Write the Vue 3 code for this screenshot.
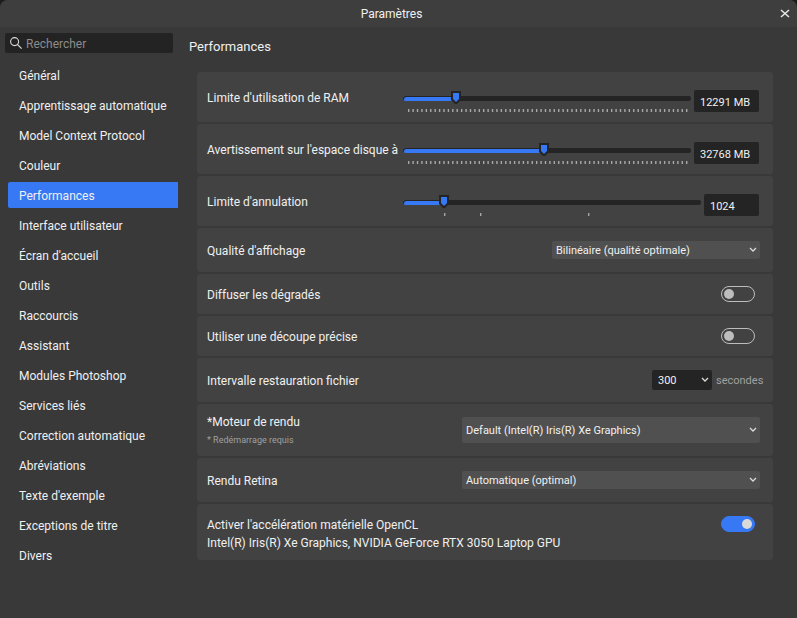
<script setup>
import { ref } from 'vue';

const search = ref('');
const current = ref('Performances');

const pages = [
  'Général',
  'Apprentissage automatique',
  'Model Context Protocol',
  'Couleur',
  'Performances',
  'Interface utilisateur',
  "Écran d'accueil",
  'Outils',
  'Raccourcis',
  'Assistant',
  'Modules Photoshop',
  'Services liés',
  'Correction automatique',
  'Abréviations',
  "Texte d'exemple",
  'Exceptions de titre',
  'Divers',
];

// 64 evenly spaced marks for the memory sliders
const evenTicks = Array.from({ length: 64 }, (_, i) => (i / 63) * 100);

// pos is the thumb position in thousandths of the slider
const sliders = ref([
  { id: 'ram', label: "Limite d'utilisation de RAM", pos: 173, value: '12291 MB', ticks: evenTicks },
  { id: 'disk', label: "Avertissement sur l'espace disque à", pos: 489, value: '32768 MB', ticks: evenTicks },
  { id: 'undo', label: "Limite d'annulation", pos: 125, value: '1024', ticks: [12.5, 25, 62.5], short: true },
]);

const dither = ref(false);
const preciseClip = ref(false);
const openCl = ref(true);
</script>

<template>
  <div class="window">
    <header class="titlebar">
      <h1>Paramètres</h1>
      <button class="close" aria-label="Fermer">
        <svg width="10" height="10" viewBox="0 0 10 10">
          <path d="M1 1L9 8M9 1L1 8" stroke="#e6e6e6" stroke-width="1.6" fill="none" />
        </svg>
      </button>
    </header>

    <div class="body">
      <aside>
        <label class="search">
          <svg width="12" height="12" viewBox="0 0 12 12">
            <circle cx="4.6" cy="4.6" r="4" stroke="#dcdcdc" stroke-width="1.1" fill="none" />
            <path d="M7.4 7.4L11.6 11.6" stroke="#dcdcdc" stroke-width="1.2" />
          </svg>
          <input type="text" v-model="search" placeholder="Rechercher" aria-label="Rechercher" />
        </label>
        <nav>
          <button
            v-for="page in pages"
            :key="page"
            :class="{ active: page === current }"
            @click="current = page"
          >{{ page }}</button>
        </nav>
      </aside>

      <main>
        <h2>Performances</h2>
        <div class="rows">
          <div v-for="s in sliders" :key="s.id" class="row slider-row">
            <label :for="s.id">{{ s.label }}</label>
            <div class="slider">
              <input type="range" :id="s.id" min="0" max="1000" v-model="s.pos" :style="{ '--pos': s.pos / 1000 }" />
              <svg class="ticks">
                <rect v-for="t in s.ticks" :key="t" :x="t + '%'" y="0" width="1.4" height="3" />
              </svg>
            </div>
            <input class="value" :class="{ short: s.short }" type="text" v-model="s.value" :aria-label="s.label" />
          </div>

          <div class="row tall">
            <label for="quality">Qualité d'affichage</label>
            <select id="quality" class="medium">
              <option>Bilinéaire (qualité optimale)</option>
            </select>
          </div>

          <div class="row">
            <label for="dither">Diffuser les dégradés</label>
            <input id="dither" class="toggle" type="checkbox" v-model="dither" />
          </div>

          <div class="row">
            <label for="clip">Utiliser une découpe précise</label>
            <input id="clip" class="toggle" type="checkbox" v-model="preciseClip" />
          </div>

          <div class="row tall">
            <label for="interval">Intervalle restauration fichier</label>
            <select id="interval" class="dark">
              <option>300</option>
            </select>
            <span class="unit">secondes</span>
          </div>

          <div class="row renderer">
            <div class="text">
              <label for="renderer">*Moteur de rendu</label>
              <small>* Redémarrage requis</small>
            </div>
            <select id="renderer" class="large high">
              <option>Default (Intel(R) Iris(R) Xe Graphics)</option>
            </select>
          </div>

          <div class="row tall">
            <label for="retina">Rendu Retina</label>
            <select id="retina" class="large">
              <option>Automatique (optimal)</option>
            </select>
          </div>

          <div class="row opencl">
            <div class="text">
              <label for="opencl">Activer l'accélération matérielle OpenCL</label>
              <p>Intel(R) Iris(R) Xe Graphics, NVIDIA GeForce RTX 3050 Laptop GPU</p>
            </div>
            <input id="opencl" class="toggle" type="checkbox" v-model="openCl" />
          </div>
        </div>
      </main>
    </div>
  </div>
</template>

<style>
body {
  background-color: #1c1c1c;
}
</style>

<style scoped>
* {
  box-sizing: border-box;
}

.window {
  min-height: 100vh;
  background-color: #393939;
  border-radius: 8px 8px 0 0;
  color: #f0f0f0;
  font-family: Roboto, "Noto Sans", sans-serif;
  font-size: 12px;
  line-height: 16px;
}

h1,
h2,
p {
  margin: 0;
  font-weight: normal;
}

button,
input,
select {
  margin: 0;
  padding: 0;
  border: none;
  outline: none;
  color: inherit;
  font-family: inherit;
  font-size: inherit;
  line-height: inherit;
}

.titlebar {
  display: grid;
  grid-template-columns: 25px 1fr 25px;
  align-items: center;
  height: 27px;
  background-color: #3e3e3e;
  border-radius: 8px 8px 0 0;
}

.titlebar h1 {
  grid-column: 2;
  padding-right: 14px;
  font-size: 12px;
  text-align: center;
}

.close {
  display: flex;
  align-items: center;
  height: 24px;
  padding-left: 8px;
  background: none;
}

.body {
  display: flex;
}

aside {
  width: 178px;
  padding-top: 6px;
}

.search {
  display: flex;
  align-items: center;
  gap: 4px;
  height: 20px;
  margin: 0 5px;
  padding: 0 5px;
  background-color: #232323;
  border-radius: 2px;
}

.search svg {
  flex: none;
}

.search input {
  width: 100%;
  padding-top: 2px;
  background: none;
  font-size: 12px;
}

.search input::placeholder {
  color: #8c8c8c;
  opacity: 1;
}

nav {
  display: flex;
  flex-direction: column;
  gap: 4px;
  padding: 9px 0 0 8px;
}

nav button {
  height: 26px;
  padding: 1px 0 0 11px;
  background: none;
  border-radius: 2px 0 0 2px;
  text-align: left;
  white-space: nowrap;
}

nav .active {
  background-color: #3778f5;
}

main {
  flex: 1;
  min-width: 0;
  padding: 10px 24px 24px 19px;
}

h2 {
  margin: 0 -8px;
  font-size: 13px;
  line-height: 20px;
}

.rows {
  display: flex;
  flex-direction: column;
  gap: 2px;
  padding-top: 15px;
}

.row {
  display: flex;
  align-items: center;
  min-height: 40px;
  padding: 0 13px 0 10px;
  background-color: #424242;
  border-radius: 3px;
}

.row > label,
.text {
  flex: 1;
  padding-top: 2px;
}

.tall {
  min-height: 44px;
}

.slider-row {
  align-items: flex-start;
  padding: 18px 14px 10px 10px;
}

.slider-row > label {
  flex: none;
  width: 196px;
  padding-top: 0;
  white-space: nowrap;
}

.slider {
  display: flex;
  flex: 1;
  flex-direction: column;
  gap: 5px;
  min-width: 0;
  padding-top: 1px;
}

.slider input {
  -webkit-appearance: none;
  appearance: none;
  display: block;
  width: 100%;
  height: 13px;
  background: none;
}

.slider input::-webkit-slider-runnable-track {
  height: 5px;
  margin-top: 2px;
  border-radius: 3px;
  background: linear-gradient(to right, #3778f5 calc(5px + (100% - 10px) * var(--pos)), #242424 0);
  box-shadow: inset 1px 1px 0 #242424;
}

.slider input::-webkit-slider-thumb {
  -webkit-appearance: none;
  appearance: none;
  width: 10px;
  height: 13px;
  margin-top: -5px;
  background: url("data:image/svg+xml,%3Csvg xmlns='http://www.w3.org/2000/svg' width='10' height='13'%3E%3Cpath d='M0 0H10V9L6 13H4L0 9Z' fill='%23242424'/%3E%3Cpath d='M2 2H8V8L5 11L2 8Z' fill='%233778f5'/%3E%3C/svg%3E");
}

.ticks {
  width: calc(100% - 10px);
  height: 3px;
  margin: 0 5px;
  overflow: visible;
  fill: #a8a8a8;
}

.value {
  width: 65px;
  height: 22px;
  margin-left: 3px;
  padding: 2px 0 0 6px;
  background-color: #242424;
  border-radius: 2px;
  font-size: 11px;
}

.value.short {
  width: 55px;
}

select {
  -webkit-appearance: none;
  appearance: none;
  height: 18px;
  padding: 2px 16px 0 4px;
  background: #505050 url("data:image/svg+xml,%3Csvg xmlns='http://www.w3.org/2000/svg' width='8' height='7'%3E%3Cpath d='M1 1L4 4L7 1' fill='none' stroke='%23dcdcdc' stroke-width='1.3'/%3E%3C/svg%3E") no-repeat right 3px center;
  border-radius: 2px;
  font-size: 11px;
}

.medium {
  width: 208px;
}

.large {
  width: 298px;
}

.high {
  height: 26px;
}

.dark {
  width: 60px;
  height: 20px;
  padding-left: 6px;
  background-color: #242424;
}

.unit {
  width: 48px;
  padding: 2px 0 0 4px;
  color: #a0a0a0;
  font-size: 11px;
}

.toggle {
  -webkit-appearance: none;
  appearance: none;
  display: flex;
  align-items: center;
  width: 34px;
  height: 16px;
  margin-right: 5px;
  padding: 0 2px;
  border: 1px solid #bdbdbd;
  border-radius: 8px;
}

.toggle::before {
  content: "";
  width: 10px;
  height: 10px;
  background-color: #bdbdbd;
  border-radius: 50%;
}

.toggle:checked {
  justify-content: flex-end;
  background-color: #3778f5;
  border-color: #3778f5;
}

.toggle:checked::before {
  background-color: #d9d9d9;
}

.renderer {
  min-height: 52px;
}

.text label,
.text small {
  display: block;
  line-height: 18px;
}

.text small {
  color: #a0a0a0;
  font-size: 9px;
}

.opencl {
  align-items: flex-start;
  padding: 12px 13px 8px 10px;
}

.opencl .text {
  padding-top: 0;
}

.opencl p {
  line-height: 18px;
}
</style>
